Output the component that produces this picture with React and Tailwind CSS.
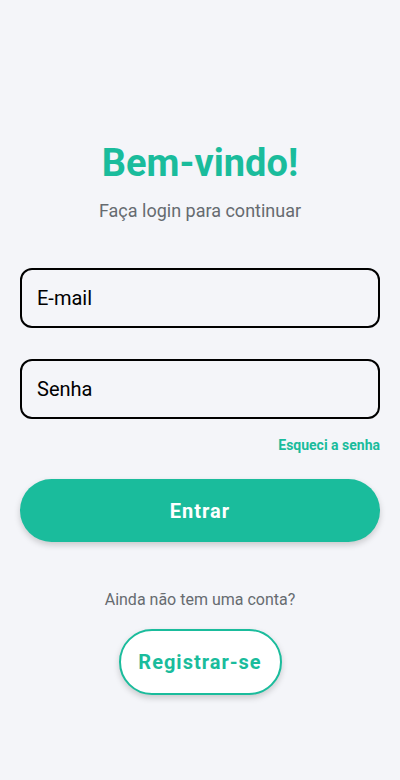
export default function App() {
  return (
    <div className="min-h-[780px] w-[400px] bg-[#f4f5f9] px-5 pt-[140px] flex flex-col" style={{ fontFamily: 'Roboto, "Noto Sans", sans-serif' }}>
      <h1 className="text-center text-[38px] leading-[46px] font-bold text-[#1abc9c]">Bem-vindo!</h1>
      <p className="mt-[13px] text-center text-[18px] leading-[24px] text-[#666b70]">Faça login para continuar</p>
      <div className="mt-[45px] h-[60px] rounded-[12px] border-2 border-black bg-[#f4f5f9] flex items-center px-[15px] text-[20px] text-black">E-mail</div>
      <div className="mt-[31px] h-[60px] rounded-[12px] border-2 border-black bg-[#f4f5f9] flex items-center px-[15px] text-[20px] text-black">Senha</div>
      <div className="mt-[16px] flex justify-end">
        <span className="text-[14px] leading-[20px] font-bold text-[#1abc9c]">Esqueci a senha</span>
      </div>
      <button className="mt-[24px] h-[63px] rounded-full bg-[#1abc9c] text-white text-[20px] font-bold tracking-[1px] shadow-[0_3px_6px_rgba(0,0,0,0.18)]">Entrar</button>
      <p className="mt-[48px] text-center text-[16px] leading-[20px] text-[#666b70]">Ainda não tem uma conta?</p>
      <div className="mt-[19px] flex justify-center">
        <button className="h-[66px] w-[163px] rounded-full bg-white border-2 border-[#1abc9c] text-[#1abc9c] text-[20px] font-bold tracking-[1px] shadow-[0_3px_6px_rgba(0,0,0,0.18)]">Registrar-se</button>
      </div>
    </div>
  );
}
